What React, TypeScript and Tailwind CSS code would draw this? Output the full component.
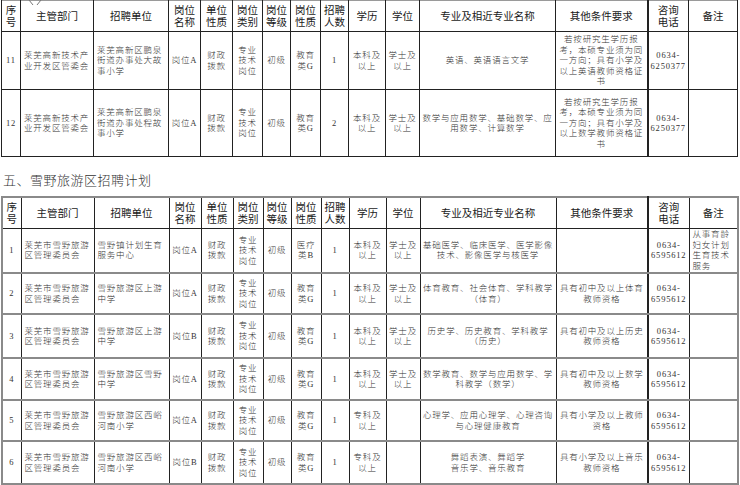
import React from "react";

const widths = [19, 73, 75, 32, 32, 30, 28, 30, 28, 37, 34, 136, 92, 41, 49];
const headers = [
  ["序", "号"],
  ["主管部门"],
  ["招聘单位"],
  ["岗位", "名称"],
  ["单位", "性质"],
  ["岗位", "类别"],
  ["岗位", "等级"],
  ["岗位", "性质"],
  ["招聘", "人数"],
  ["学历"],
  ["学位"],
  ["专业及相近专业名称"],
  ["其他条件要求"],
  ["咨询", "电话"],
  ["备注"],
];

type Row = { h: number; cells: string[][] };

const common = (name: string, kind: string, edu: string, deg: string[]) => [
  [name],
  ["财政", "拨款"],
  ["专业", "技术", "岗位"],
  ["初级"],
  kind.split("|"),
  ["1"],
  edu.split("|"),
  deg,
];

const t1: Row[] = [
  {
    h: 58,
    cells: [
      ["11"],
      ["莱芜高新技术产", "业开发区管委会"],
      ["莱芜高新区鹏泉", "街道办事处大故", "事小学"],
      ...common("岗位A", "教育|类G", "本科及|以上", ["学士及", "以上"]),
      ["英语、英语语言文学"],
      ["若按研究生学历报", "考，本硕专业须为同", "一方向；具有小学及", "以上英语教师资格证", "书"],
      ["0634-", "6250377"],
      [],
    ],
  },
  {
    h: 67,
    cells: [
      ["12"],
      ["莱芜高新技术产", "业开发区管委会"],
      ["莱芜高新区鹏泉", "街道办事处程故", "事小学"],
      ["岗位A"],
      ["财政", "拨款"],
      ["专业", "技术", "岗位"],
      ["初级"],
      ["教育", "类G"],
      ["2"],
      ["本科及", "以上"],
      ["学士及", "以上"],
      ["数学与应用数学、基础数学、应", "用数学、计算数学"],
      ["若按研究生学历报", "考，本硕专业须为同", "一方向；具有小学及", "以上数学教师资格证", "书"],
      ["0634-", "6250377"],
      [],
    ],
  },
];

const dept = ["莱芜市雪野旅游", "区管理委员会"];
const ph = ["0634-", "6595612"];

const t2: Row[] = [
  {
    h: 45,
    cells: [
      ["1"],
      dept,
      ["雪野镇计划生育", "服务中心"],
      ...common("岗位A", "医疗|类B", "本科及|以上", ["学士及", "以上"]),
      ["基础医学、临床医学、医学影像", "技术、影像医学与核医学"],
      [],
      ph,
      ["从事育龄", "妇女计划", "生育技术", "服务"],
    ],
  },
  {
    h: 41,
    cells: [
      ["2"],
      dept,
      ["雪野旅游区上游", "中学"],
      ...common("岗位A", "教育|类G", "本科及|以上", ["学士及", "以上"]),
      ["体育教育、社会体育、学科教学", "（体育）"],
      ["具有初中及以上体育", "教师资格"],
      ph,
      [],
    ],
  },
  {
    h: 44,
    cells: [
      ["3"],
      dept,
      ["雪野旅游区上游", "中学"],
      ...common("岗位B", "教育|类G", "本科及|以上", ["学士及", "以上"]),
      ["历史学、历史教育、学科教学", "（历史）"],
      ["具有初中及以上历史", "教师资格"],
      ph,
      [],
    ],
  },
  {
    h: 42,
    cells: [
      ["4"],
      dept,
      ["雪野旅游区雪野", "中学"],
      ...common("岗位A", "教育|类G", "本科及|以上", ["学士及", "以上"]),
      ["数学教育、数学与应用数学、学", "科教学（数学）"],
      ["具有初中及以上数学", "教师资格"],
      ph,
      [],
    ],
  },
  {
    h: 41,
    cells: [
      ["5"],
      dept,
      ["雪野旅游区西峪", "河南小学"],
      ...common("岗位A", "教育|类G", "专科及|以上", []),
      ["心理学、应用心理学、心理咨询", "与心理健康教育"],
      ["具有小学及以上教师", "资格"],
      ph,
      [],
    ],
  },
  {
    h: 43,
    cells: [
      ["6"],
      dept,
      ["雪野旅游区西峪", "河南小学"],
      ...common("岗位B", "教育|类G", "专科及|以上", []),
      ["舞蹈表演、舞蹈学", "音乐学、音乐教育"],
      ["具有小学及以上音乐", "教师资格"],
      ph,
      [],
    ],
  },
];

const leftCols = new Set([1, 2, 14]);

function Header() {
  return (
    <thead>
      <tr className="h-[31px]">
        {headers.map((lines, i) => (
          <th
            key={i}
            className={`border-x border-b border-b-[#222] border-x-[#222] ${
              i === 13 ? "border-l-2" : ""
            } p-0 align-middle text-center font-normal text-[10.5px] leading-[12px] text-[#1a1a1a] [font-family:'Liberation_Sans','Noto_Sans_CJK_SC',sans-serif]`}
          >
            {lines.map((l, j) => (
              <div key={j}>{l}</div>
            ))}
          </th>
        ))}
      </tr>
    </thead>
  );
}

function Table({ rows, grey }: { rows: Row[]; grey: boolean }) {
  return (
    <table
      className={`table-fixed border-collapse w-[737px] ${
        grey ? "border-2 border-[#8a8a8a]" : "border border-[#9a9a9a]"
      }`}
    >
      <colgroup>
        {widths.map((w, i) => (
          <col key={i} style={{ width: w }} />
        ))}
      </colgroup>
      <Header />
      <tbody>
        {rows.map((r, ri) => (
          <tr key={ri} style={{ height: r.h }}>
            {r.cells.map((lines, ci) => (
              <td
                key={ci}
                className={`border-x border-x-[#222] ${
                  grey ? "border-b-2 border-b-[#8a8a8a]" : "border-b border-b-[#222]"
                } ${ci === 13 ? "border-l-2" : ""} ${
                  leftCols.has(ci) ? "text-left pl-[3px]" : "text-center"
                } p-0 align-middle text-[8.5px] leading-[10.5px] tracking-[0.8px] font-light text-[#333] [font-family:'Liberation_Serif','Noto_Sans_CJK_SC',serif]`}
              >
                {lines.map((l, j) => (
                  <div key={j} className="whitespace-nowrap">
                    {l}
                  </div>
                ))}
              </td>
            ))}
          </tr>
        ))}
      </tbody>
    </table>
  );
}

export default function App() {
  return (
    <div className="relative w-[740px] h-[485px] overflow-hidden bg-white pl-[1px]">
      <svg
        className="absolute left-[28px] top-0"
        width="14"
        height="6"
        viewBox="0 0 14 6"
      >
        <path d="M1 0 L5 5 M13 0 L9 5" stroke="#777" strokeWidth="1" fill="none" />
      </svg>
      <Table rows={t1} grey={false} />
      <div className="h-[39px] pt-[16px] pl-[2px] text-[13px] leading-[15px] font-light tracking-[0.5px] text-[#333] [font-family:'Liberation_Serif','Noto_Sans_CJK_SC',serif]">
        五、雪野旅游区招聘计划
      </div>
      <Table rows={t2} grey={true} />
    </div>
  );
}
